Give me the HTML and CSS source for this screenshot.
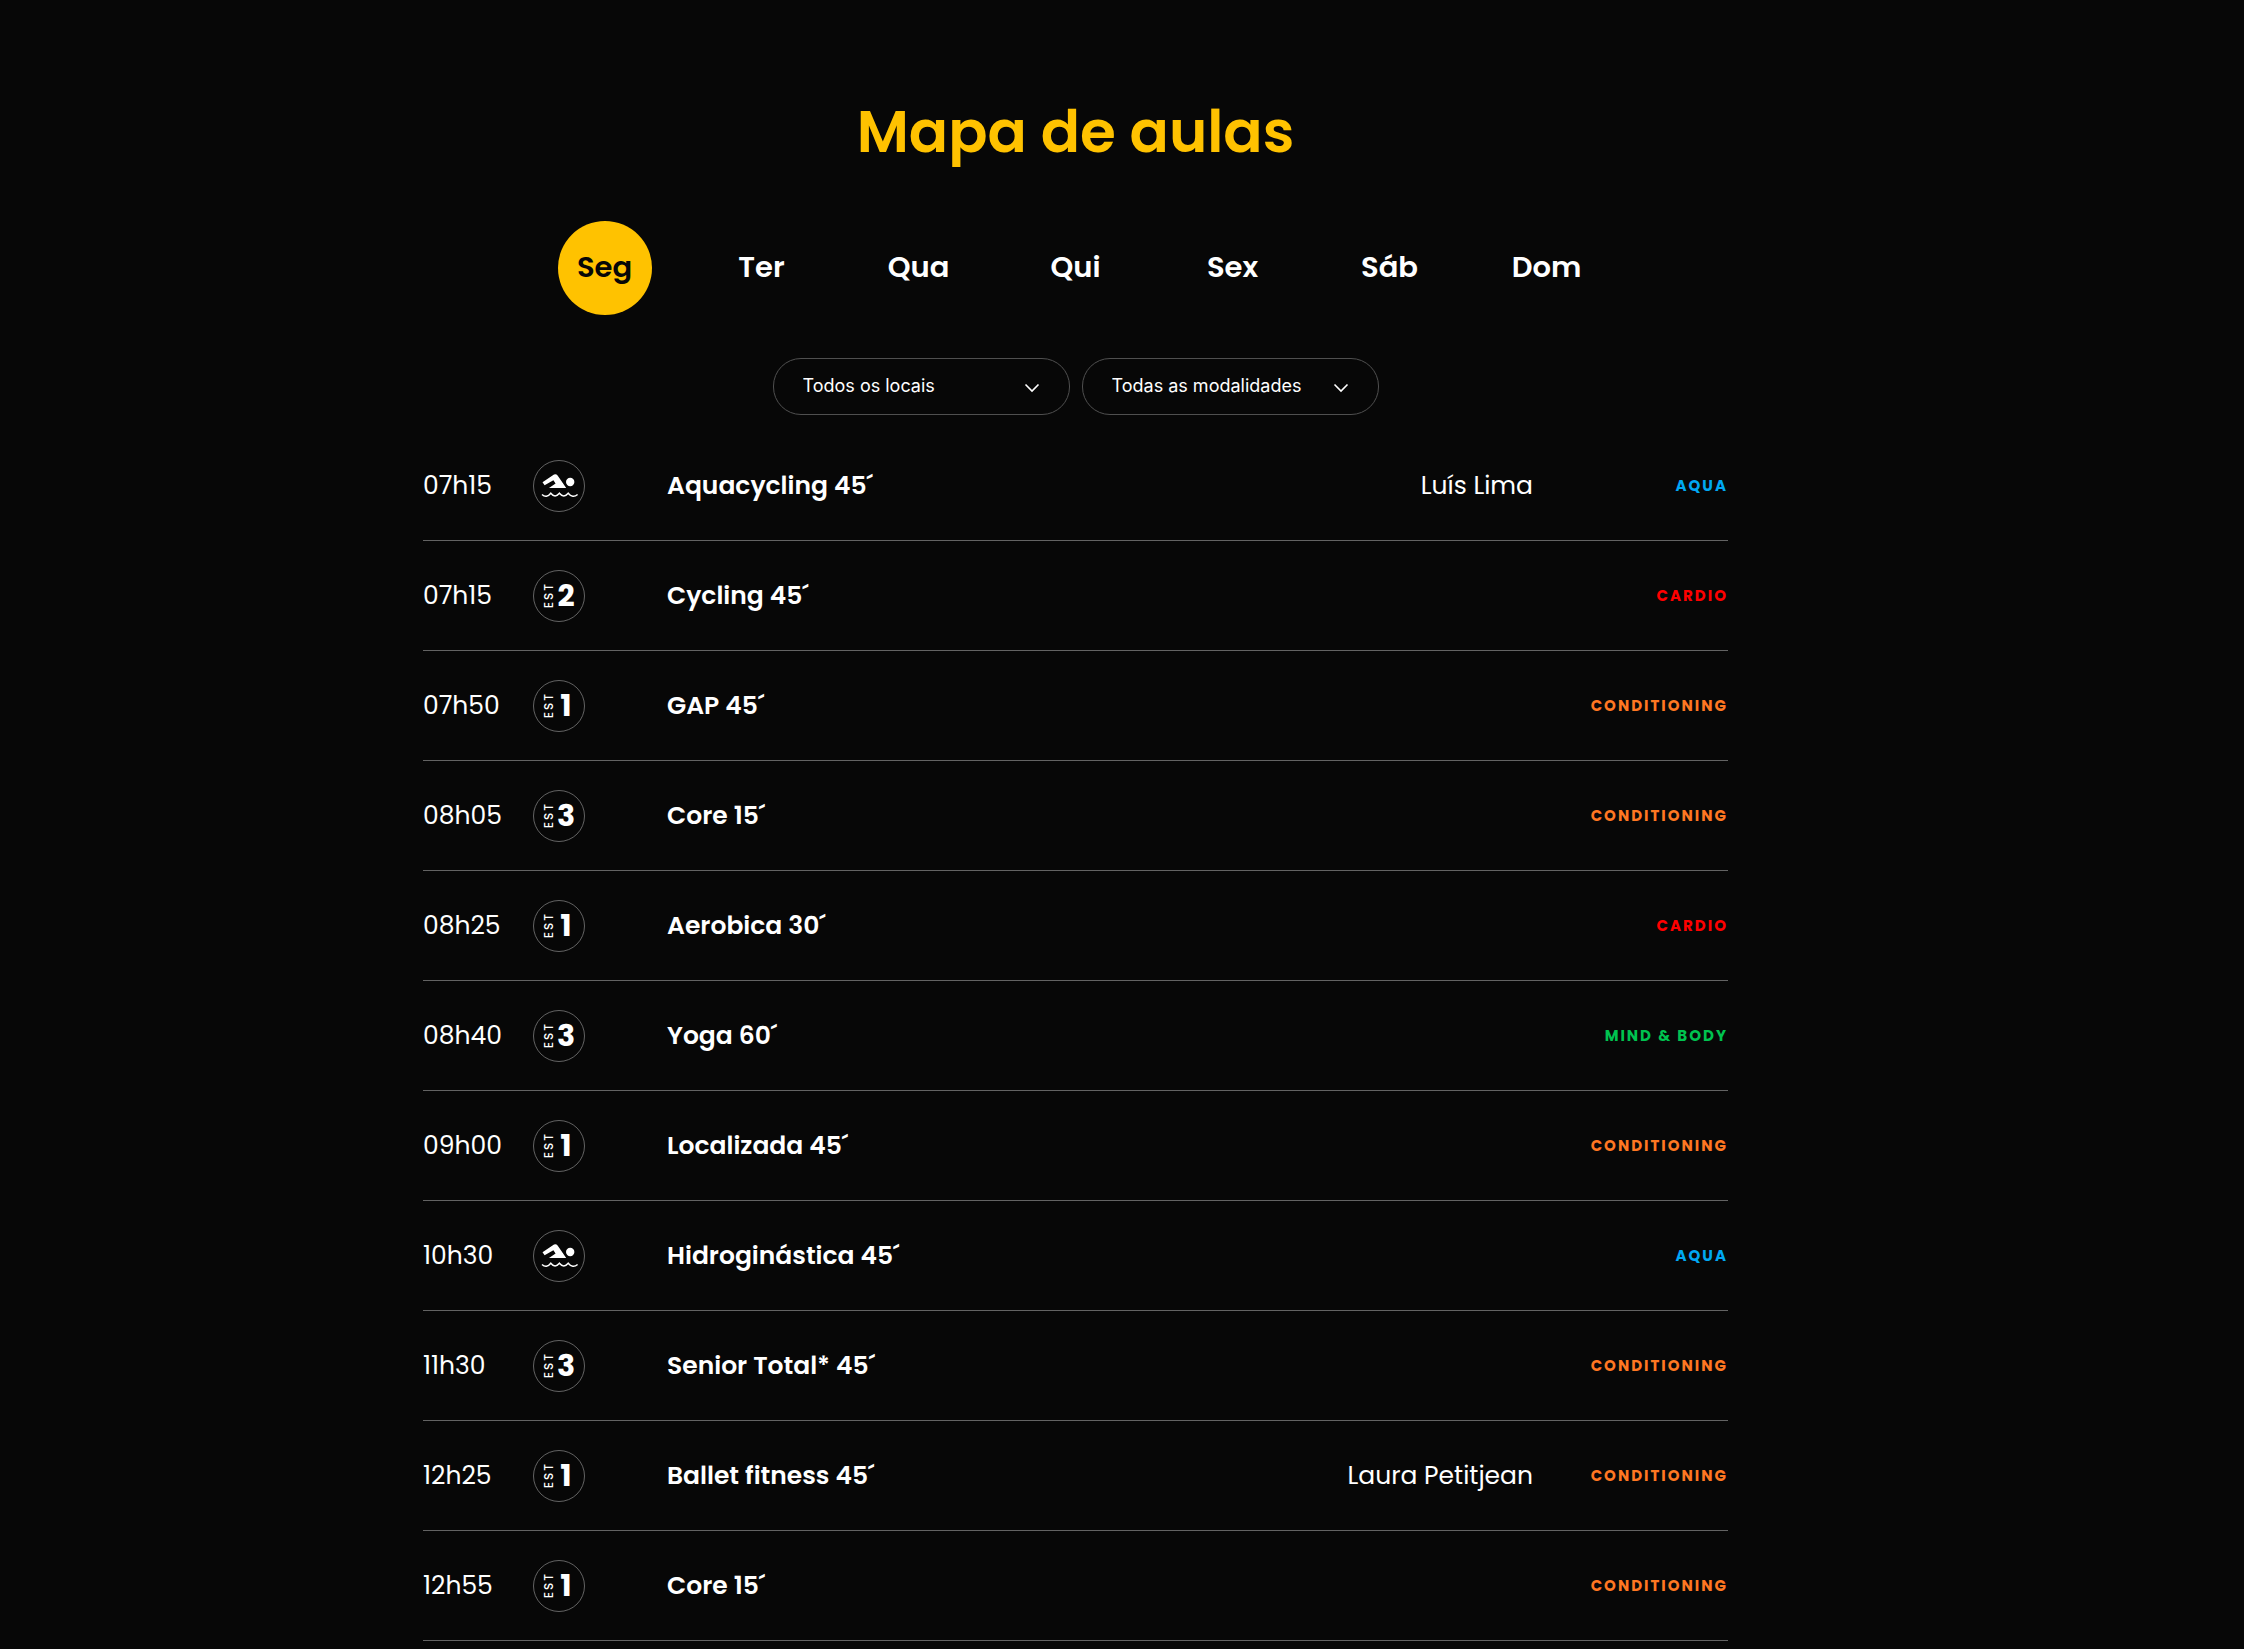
FILE: index.html
```html
<!DOCTYPE html>
<html lang="pt">
  <head>
    <meta charset="UTF-8" />
    <meta name="viewport" content="width=device-width, initial-scale=1.0" />
    <title>Mapa de aulas</title>
    <link rel="stylesheet" href="styles.css">
  </head>
  <body>
    <!-- shared icons -->
    <svg width="0" height="0" class="sprite" aria-hidden="true">
      <symbol id="swim" viewBox="1 1 50 50">
        <path d="M9.5 22.3 L21 14.6 Q23 13.6 24.6 15.4 L33.2 28 H16 L22.6 23.4 L20.4 20.2 L11.6 25.2 Z" fill="#fff" />
        <circle cx="37.2" cy="22" r="4.2" fill="#fff" />
        <path d="M9 34.5 Q13.5 38.6 17.8 33.2 Q22 38.6 26.4 33.2 Q30.8 38.6 35.2 33.2 Q39.6 38.6 44.6 34.5" fill="none" stroke="#fff" stroke-width="1.5" />
      </symbol>
      <symbol id="chevron" viewBox="0 0 16 10">
        <path d="M1.5 1.5 L8 8 L14.5 1.5" fill="none" stroke="#fff" stroke-width="1.6" />
      </symbol>
    </svg>

    <main class="container">
      <h1>Mapa de aulas</h1>

      <nav class="days">
        <button type="button" class="day active">Seg</button>
        <button type="button" class="day">Ter</button>
        <button type="button" class="day">Qua</button>
        <button type="button" class="day">Qui</button>
        <button type="button" class="day">Sex</button>
        <button type="button" class="day">Sáb</button>
        <button type="button" class="day">Dom</button>
      </nav>

      <form class="filters">
        <div class="filter">
          <select id="local" aria-label="Local">
            <option>Todos os locais</option>
          </select>
          <svg class="arrow" aria-hidden="true"><use href="#chevron" /></svg>
        </div>
        <div class="filter">
          <select id="modalidade" aria-label="Modalidade">
            <option>Todas as modalidades</option>
          </select>
          <svg class="arrow" aria-hidden="true"><use href="#chevron" /></svg>
        </div>
      </form>

      <table class="classes">
        <tbody>
          <tr>
            <td class="time">07h15</td>
            <td class="place"><svg class="badge"><use href="#swim" /></svg></td>
            <td class="name">Aquacycling 45´</td>
            <td class="teacher">Luís Lima</td>
            <td class="tag aqua">Aqua</td>
          </tr>
          <tr>
            <td class="time">07h15</td>
            <td class="place"><div class="badge"><span class="est">EST</span><b>2</b></div></td>
            <td class="name">Cycling 45´</td>
            <td class="teacher"></td>
            <td class="tag cardio">Cardio</td>
          </tr>
          <tr>
            <td class="time">07h50</td>
            <td class="place"><div class="badge"><span class="est">EST</span><b>1</b></div></td>
            <td class="name">GAP 45´</td>
            <td class="teacher"></td>
            <td class="tag conditioning">Conditioning</td>
          </tr>
          <tr>
            <td class="time">08h05</td>
            <td class="place"><div class="badge"><span class="est">EST</span><b>3</b></div></td>
            <td class="name">Core 15´</td>
            <td class="teacher"></td>
            <td class="tag conditioning">Conditioning</td>
          </tr>
          <tr>
            <td class="time">08h25</td>
            <td class="place"><div class="badge"><span class="est">EST</span><b>1</b></div></td>
            <td class="name">Aerobica 30´</td>
            <td class="teacher"></td>
            <td class="tag cardio">Cardio</td>
          </tr>
          <tr>
            <td class="time">08h40</td>
            <td class="place"><div class="badge"><span class="est">EST</span><b>3</b></div></td>
            <td class="name">Yoga 60´</td>
            <td class="teacher"></td>
            <td class="tag mind">Mind &amp; Body</td>
          </tr>
          <tr>
            <td class="time">09h00</td>
            <td class="place"><div class="badge"><span class="est">EST</span><b>1</b></div></td>
            <td class="name">Localizada 45´</td>
            <td class="teacher"></td>
            <td class="tag conditioning">Conditioning</td>
          </tr>
          <tr>
            <td class="time">10h30</td>
            <td class="place"><svg class="badge"><use href="#swim" /></svg></td>
            <td class="name">Hidroginástica 45´</td>
            <td class="teacher"></td>
            <td class="tag aqua">Aqua</td>
          </tr>
          <tr>
            <td class="time">11h30</td>
            <td class="place"><div class="badge"><span class="est">EST</span><b>3</b></div></td>
            <td class="name">Senior Total* 45´</td>
            <td class="teacher"></td>
            <td class="tag conditioning">Conditioning</td>
          </tr>
          <tr>
            <td class="time">12h25</td>
            <td class="place"><div class="badge"><span class="est">EST</span><b>1</b></div></td>
            <td class="name">Ballet fitness 45´</td>
            <td class="teacher">Laura Petitjean</td>
            <td class="tag conditioning">Conditioning</td>
          </tr>
          <tr>
            <td class="time">12h55</td>
            <td class="place"><div class="badge"><span class="est">EST</span><b>1</b></div></td>
            <td class="name">Core 15´</td>
            <td class="teacher"></td>
            <td class="tag conditioning">Conditioning</td>
          </tr>
        </tbody>
      </table>
    </main>

    <script>
      const days = document.querySelectorAll(".day");
      days.forEach((day) => {
        day.addEventListener("click", () => {
          days.forEach((d) => d.classList.remove("active"));
          day.classList.add("active");
        });
      });
    </script>
  </body>
</html>
```

FILE: styles.css
```css
* {
  margin: 0;
  padding: 0;
  box-sizing: border-box;
}
body {
  font-family: Poppins, Inter, sans-serif;
  background: #070707;
  color: #fff;
  padding: 96px 93px 0 0;
}
.sprite {
  position: absolute;
}
.container {
  max-width: 1305px;
  margin: 0 auto;
}
h1 {
  color: #ffc200;
  font-size: 58px;
  line-height: 72px;
  font-weight: 600;
  text-align: center;
  margin-bottom: 53px;
}
.days {
  display: flex;
  justify-content: center;
  gap: 63px;
  margin-bottom: 43px;
}
.day {
  width: 94px;
  height: 94px;
  padding-bottom: 2px;
  border: none;
  border-radius: 50%;
  background: none;
  color: #fff;
  font-family: inherit;
  font-size: 29px;
  font-weight: 600;
  cursor: pointer;
}
.day.active {
  background: #ffc200;
  color: #070707;
}
.filters {
  display: flex;
  justify-content: center;
  gap: 12px;
  margin-bottom: 16px;
}
.filter {
  position: relative;
  width: 297px;
}
.filter select {
  appearance: none;
  width: 100%;
  height: 57px;
  padding: 0 60px 2px 29px;
  border: 1px solid #4f4f4f;
  border-radius: 28px;
  background: transparent;
  color: #fff;
  font-family: Inter, sans-serif;
  font-size: 18px;
  cursor: pointer;
}
.arrow {
  position: absolute;
  right: 30px;
  top: 25px;
  width: 16px;
  height: 10px;
  pointer-events: none;
}
.classes {
  width: 100%;
  border-spacing: 0;
  table-layout: fixed;
  font-size: 25px;
}
.classes td {
  height: 110px;
  border-bottom: 1px solid #636363;
  vertical-align: middle;
}
.time {
  width: 110px;
}
.place {
  width: 134px;
}
.name {
  font-weight: 600;
}
.teacher {
  text-align: right;
}
.tag {
  width: 195px;
  text-align: right;
  text-transform: uppercase;
  font-size: 15px;
  font-weight: 700;
  letter-spacing: 2px;
}
.aqua {
  color: #00a8f3;
}
.cardio {
  color: #ff0000;
}
.conditioning {
  color: #ff7722;
}
.mind {
  color: #00c350;
}
.badge {
  display: flex;
  align-items: center;
  justify-content: center;
  width: 52px;
  height: 52px;
  border: 1px solid #636363;
  border-radius: 50%;
}
.badge b {
  width: 20px;
  font-size: 30px;
  line-height: 30px;
  font-weight: 700;
  text-align: center;
}
.est {
  writing-mode: vertical-rl;
  transform: rotate(180deg);
  font-size: 12px;
  line-height: 14px;
  font-weight: 500;
  letter-spacing: 2px;
}
```
